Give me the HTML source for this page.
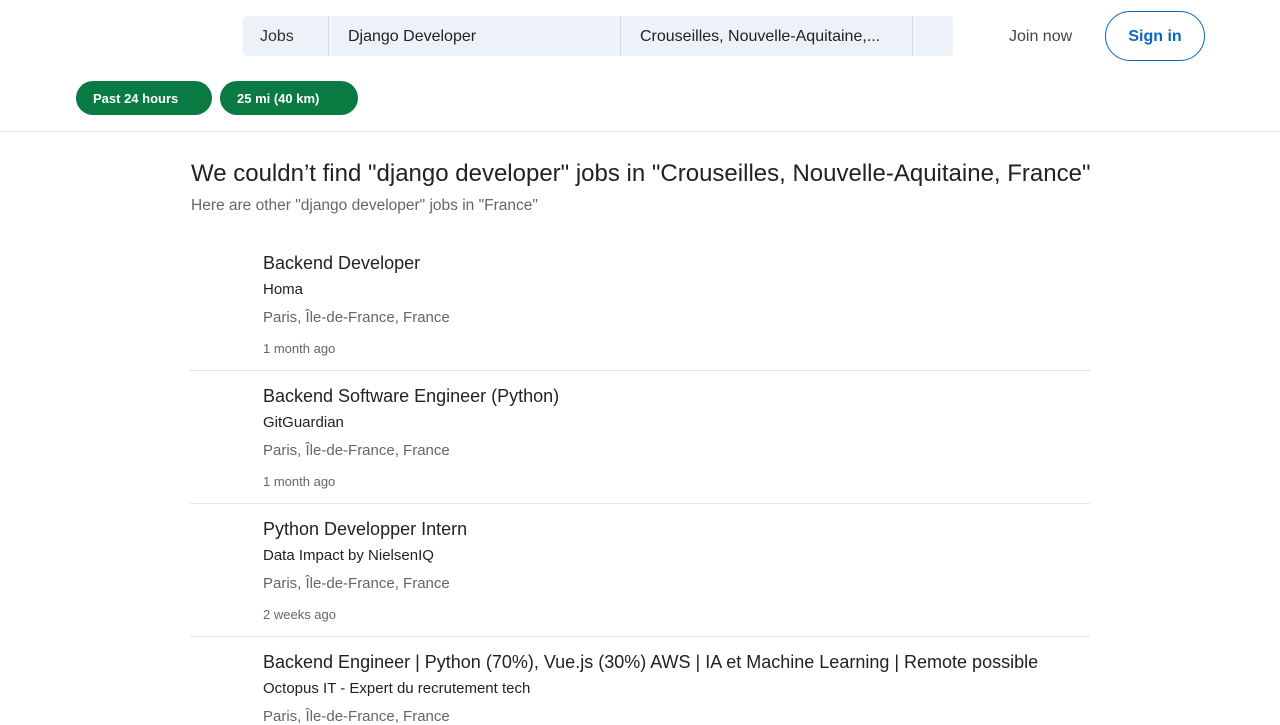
<!DOCTYPE html>
<html><head><meta charset="utf-8"><style>
*{margin:0;padding:0;box-sizing:border-box}
body{width:1280px;height:720px;overflow:hidden;background:#fff;font-family:"Liberation Sans",sans-serif;color:#222;position:relative}
.a{position:absolute;white-space:nowrap}
.search{left:243px;top:16px;width:710px;height:40px;background:#edf2f8;border-radius:4px}
.sep{position:absolute;top:0;width:1px;height:40px;background:#d6dbe0}
.pill{height:34px;top:81px;background:#087a42;border-radius:17px;color:#fff;font-weight:bold;font-size:13px;line-height:36px;padding-left:17px}
.hr{left:0;top:131px;width:1280px;height:1px;background:#e5e5e5}
.line{left:190px;width:900px;height:1px;background:#e5e5e5}
</style></head><body>
<div class="a search">
 <div class="sep" style="left:85px"></div><div class="sep" style="left:377px"></div><div class="sep" style="left:669px"></div>
 <div class="a" style="left:17px;top:12px;font-size:16px;color:#333">Jobs</div>
 <div class="a" style="left:105px;top:12px;font-size:16px;color:#222">Django Developer</div>
 <div class="a" style="left:397px;top:12px;font-size:16px;color:#222">Crouseilles, Nouvelle-Aquitaine,...</div>
</div>
<div class="a" style="left:1009px;top:28px;font-size:16px;color:#444">Join now</div>
<div class="a" style="left:1105px;top:11px;width:100px;height:50px;border:1px solid #0a66c2;border-radius:25px;color:#0a66c2;font-size:16px;font-weight:bold;text-align:center;line-height:50px">Sign in</div>
<div class="a pill" style="left:76px;width:136px">Past 24 hours</div>
<div class="a pill" style="left:220px;width:138px">25 mi (40 km)</div>
<div class="a hr"></div>
<div class="a" style="left:191px;top:160px;font-size:24px;color:#222">We couldn’t find "django developer" jobs in "Crouseilles, Nouvelle-Aquitaine, France"</div>
<div class="a" style="left:191px;top:197px;font-size:15.5px;color:#666">Here are other "django developer" jobs in "France"</div>

<div class="a" style="left:263px;top:253px;font-size:18px">Backend Developer</div>
<div class="a" style="left:263px;top:281px;font-size:15px">Homa</div>
<div class="a" style="left:263px;top:309px;font-size:15px;color:#666">Paris, Île-de-France, France</div>
<div class="a" style="left:263px;top:341px;font-size:13px;color:#666">1 month ago</div>
<div class="a line" style="top:370px"></div>

<div class="a" style="left:263px;top:386px;font-size:18px">Backend Software Engineer (Python)</div>
<div class="a" style="left:263px;top:414px;font-size:15px">GitGuardian</div>
<div class="a" style="left:263px;top:442px;font-size:15px;color:#666">Paris, Île-de-France, France</div>
<div class="a" style="left:263px;top:474px;font-size:13px;color:#666">1 month ago</div>
<div class="a line" style="top:503px"></div>

<div class="a" style="left:263px;top:519px;font-size:18px">Python Developper Intern</div>
<div class="a" style="left:263px;top:547px;font-size:15px">Data Impact by NielsenIQ</div>
<div class="a" style="left:263px;top:575px;font-size:15px;color:#666">Paris, Île-de-France, France</div>
<div class="a" style="left:263px;top:607px;font-size:13px;color:#666">2 weeks ago</div>
<div class="a line" style="top:636px"></div>

<div class="a" style="left:263px;top:652px;font-size:18px">Backend Engineer | Python (70%), Vue.js (30%) AWS | IA et Machine Learning | Remote possible</div>
<div class="a" style="left:263px;top:680px;font-size:15px">Octopus IT - Expert du recrutement tech</div>
<div class="a" style="left:263px;top:708px;font-size:15px;color:#666">Paris, Île-de-France, France</div>
</body></html>
